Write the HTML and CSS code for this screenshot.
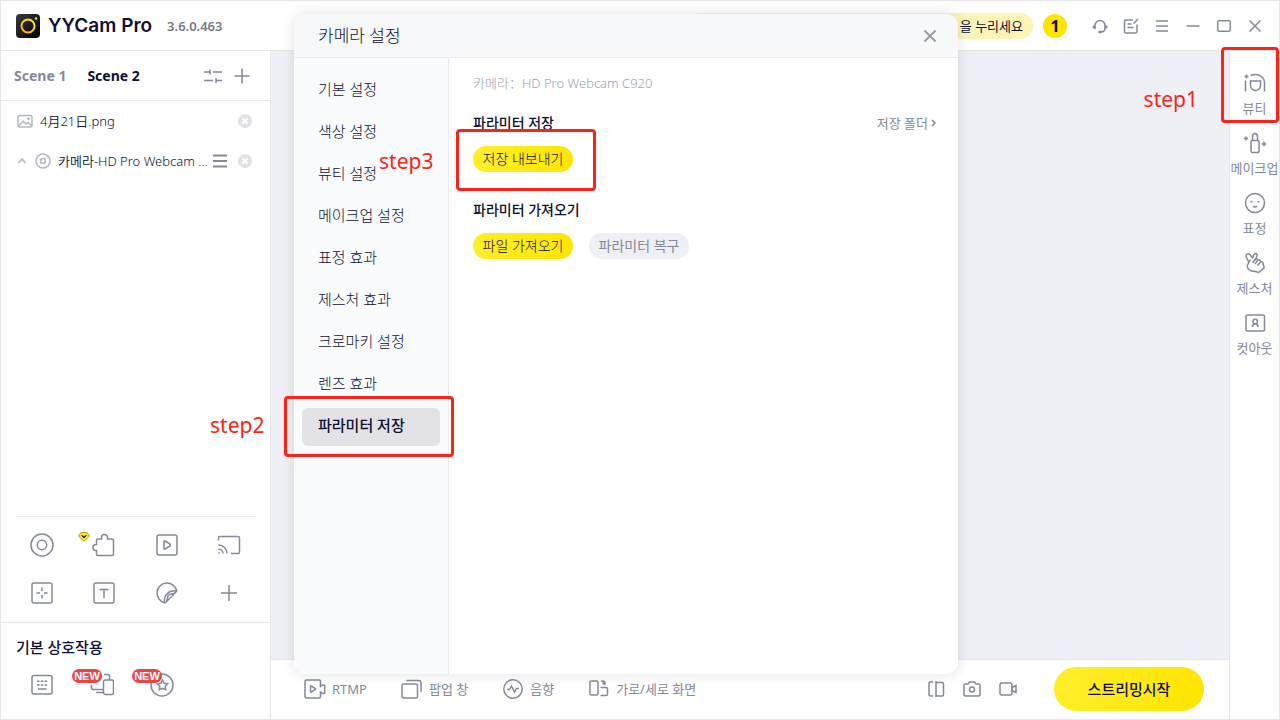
FILE: index.html
```html
<!DOCTYPE html>
<html lang="ko">
<head>
    <meta charset="UTF-8">
    <meta name="viewport" content="width=device-width, initial-scale=1.0">
    <title>YYCam Pro</title>
    <link rel="stylesheet" href="styles.css">
</head>
<body>
    <div class="app">
        <header class="topbar">
            <svg class="logo" width="24" height="24" viewBox="0 0 24 24">
                <defs>
                    <linearGradient id="logoRing" x1="1" y1="0" x2="0" y2="1"><stop offset="0" stop-color="#ffee00"/><stop offset="1" stop-color="#ffb400"/></linearGradient>
                    <linearGradient id="logoBg" x1="0" y1="0" x2="1" y2="1"><stop offset="0" stop-color="#3a3a3a"/><stop offset="1" stop-color="#000"/></linearGradient>
                </defs>
                <rect width="24" height="24" rx="4" fill="url(#logoBg)"/>
                <circle cx="12" cy="12" r="6.5" fill="none" stroke="url(#logoRing)" stroke-width="2"/>
                <circle cx="20" cy="4.5" r="1.2" fill="#ffe500"/>
            </svg>
            <h1 class="brand">YYCam Pro</h1>
            <span class="version">3.6.0.463</span>
            <div class="notice">을 누리세요</div>
            <div class="badge-count">1</div>
            <div class="window-actions">
                <button type="button" aria-label="고객센터"><svg width="16" height="16" viewBox="0 0 16 16"><path d="M3 11V7.500a5 5 0 0 1 10 0V10c0 2.500-1.500 4-4 4"/><path d="M2 7.500v3M14 7.500v3M6.500 14h3" stroke-width="2.500"/></svg></button>
                <button type="button" aria-label="메모"><svg width="16" height="16" viewBox="0 0 16 16"><path d="M10 2H3a1.500 1.500 0 0 0-1.500 1.500v10A1.500 1.500 0 0 0 3 15h9.500a1.500 1.500 0 0 0 1.500-1.500V6.500M4.500 6h4M4.500 9.500h6M10.500 5.500 15 1"/></svg></button>
                <button type="button" aria-label="메뉴"><svg width="16" height="16" viewBox="0 0 16 16"><path d="M2 3h12M2 8h12M2 13h12"/></svg></button>
                <button type="button" aria-label="최소화"><svg width="16" height="16" viewBox="0 0 16 16"><path d="M1.500 8h13"/></svg></button>
                <button type="button" aria-label="최대화"><svg width="16" height="16" viewBox="0 0 16 16"><rect x="1.700" y="2.700" width="12.600" height="10.600" rx="1.500"/></svg></button>
                <button type="button" aria-label="닫기"><svg width="16" height="16" viewBox="0 0 16 16"><path d="m2.500 2.500 11 11m0-11-11 11"/></svg></button>
            </div>
        </header>

        <aside class="sidebar">
            <div class="scene-tabs">
                <button type="button" class="scene-tab">Scene 1</button>
                <button type="button" class="scene-tab active">Scene 2</button>
                <button type="button" class="scene-action" aria-label="장면 설정"><svg width="18" height="18" viewBox="0 0 18 18"><path d="M0 5h6M6 2.500v5M9 5h9M0 13.500h9M12 13.500h6M12 11v5"/></svg></button>
                <button type="button" class="scene-action" aria-label="장면 추가"><svg width="16" height="16" viewBox="0 0 16 16"><path d="M8 .5v15M.5 8h15"/></svg></button>
            </div>

            <ul class="source-list">
                <li class="source">
                    <svg class="muted" width="16" height="16" viewBox="0 0 16 16"><rect x="1" y="2.500" width="14" height="11.500" rx="2"/><path d="m2 12.500 4-4.500 3 3 2-1.500 3.500 3"/><circle cx="11.500" cy="5.800" r=".6"/></svg>
                    <span class="source-name">4月21日.png</span>
                    <button type="button" class="remove" aria-label="삭제"><svg width="14" height="14" viewBox="0 0 14 14"><circle cx="7" cy="7" r="7"/><path d="m4.500 4.500 5 5m0-5-5 5"/></svg></button>
                </li>
                <li class="source">
                    <svg class="muted caret" width="10" height="10" viewBox="0 0 10 10"><path d="m1.500 7 3.500-4 3.500 4"/></svg>
                    <svg class="muted" width="16" height="16" viewBox="0 0 16 16"><circle cx="8" cy="8" r="7"/><circle cx="8" cy="8" r="2.500"/></svg>
                    <span class="source-name">카메라-HD Pro Webcam ...</span>
                    <button type="button" class="source-menu" aria-label="메뉴"><svg width="14" height="14" viewBox="0 0 14 14"><path d="M0 1.500h14M0 7h14M0 12.500h14" stroke-width="2"/></svg></button>
                    <button type="button" class="remove" aria-label="삭제"><svg width="14" height="14" viewBox="0 0 14 14"><circle cx="7" cy="7" r="7"/><path d="m4.500 4.500 5 5m0-5-5 5"/></svg></button>
                </li>
            </ul>

            <div class="tools">
                <button type="button" aria-label="카메라"><svg width="24" height="24" viewBox="0 0 24 24"><circle cx="12" cy="12" r="11"/><circle cx="12" cy="12" r="4.700"/></svg></button>
                <button type="button" aria-label="플러그인">
                    <svg width="24" height="24" viewBox="0 0 24 24"><path d="M6 6h3.500V4.500a3 3 0 0 1 6 0V6H20a1.500 1.500 0 0 1 1.500 1.500v13.500a1.500 1.500 0 0 1-1.500 1.500H6A1.500 1.500 0 0 1 4.500 21v-3.500H4a3 3 0 0 1 0-6h.5v-4A1.500 1.500 0 0 1 6 6z"/></svg>
                    <svg class="gem" width="12" height="10" viewBox="0 0 12 10"><path d="M3 .5h6L11.500 4 6 9.500.5 4z" fill="#ffe81a" stroke="#8a7a18" stroke-width=".7"/><path d="m3.500 3.500 2.500 2.500 2.500-2.500L6 4.500z" fill="#222" stroke="#222" stroke-width=".8"/></svg>
                </button>
                <button type="button" aria-label="미디어"><svg width="24" height="24" viewBox="0 0 24 24"><rect x="2" y="2" width="20" height="20" rx="2"/><path d="M9 8.500v7c0 .6.500.8 1 .5l5-3.200c.6-.4.600-1.200 0-1.600L10 8c-.5-.3-1-.1-1 .5z"/></svg></button>
                <button type="button" aria-label="화면 공유"><svg width="24" height="24" viewBox="0 0 24 24"><path d="M1.500 7.500V5A1.500 1.500 0 0 1 3 3.500h18A1.500 1.500 0 0 1 22.500 5v14a1.500 1.500 0 0 1-1.500 1.500h-7M1.500 12a8.500 8.500 0 0 1 8.500 8.500M1.500 16a4.500 4.500 0 0 1 4.500 4.500M1.500 19.500l1 1"/></svg></button>
                <button type="button" aria-label="캡처"><svg width="24" height="24" viewBox="0 0 24 24"><rect x="2" y="2" width="20" height="20" rx="2"/><path d="M12 6.500v3.500M12 14v3.500M6.500 12H10M14 12h3.500"/></svg></button>
                <button type="button" aria-label="텍스트"><svg width="24" height="24" viewBox="0 0 24 24"><rect x="2" y="2" width="20" height="20" rx="2"/><path d="M7.500 8.500h9M12 8.500v8.500"/></svg></button>
                <button type="button" aria-label="스티커"><svg width="24" height="24" viewBox="0 0 24 24"><path d="M9.500 21.700A10 10 0 1 1 21.700 9.500c-.2.800-.5 1.200-1 1.700l-9.500 9.700c-.5.500-1 .7-1.700.8zM9.500 21.500C8.500 14.500 13.500 9 21.500 10M11 20.500c2.500-1 .5-4.500 2.500-6.500s5.500 0 7-3"/></svg></button>
                <button type="button" aria-label="추가"><svg width="24" height="24" viewBox="0 0 24 24"><path d="M12 4v16M4 12h16"/></svg></button>
            </div>

            <div class="interactions">
                <h2>기본 상호작용</h2>
                <div class="interaction-icons">
                    <button type="button" aria-label="키보드"><svg width="24" height="24" viewBox="0 0 24 24"><rect x="2" y="2.500" width="20" height="18.500" rx="2"/><path d="M7 8.300h2.500M10.800 8.300h2.500M14.600 8.300h2.500M7 12h2.500M10.800 12h2.500M14.600 12h2.500M8 16h8.500"/></svg></button>
                    <button type="button" aria-label="기기 연결"><svg width="24" height="24" viewBox="0 0 24 24"><rect x="13.500" y="7" width="10" height="14.500" rx="2"/><path d="M14 1.500h4A1.500 1.500 0 0 1 19.500 3v4M1.500 12v3A1.500 1.500 0 0 0 3 16.500h10.500M6 19.500h7"/></svg><span class="new">NEW</span></button>
                    <button type="button" aria-label="즐겨찾기"><svg width="24" height="24" viewBox="0 0 24 24"><circle cx="12" cy="12" r="11"/><path d="m12.500 7 1.700 3.200 3.500.6-2.500 2.500.5 3.500-3.200-1.500-3.200 1.500.5-3.500-2.500-2.500 3.500-.6z"/></svg><span class="new">NEW</span></button>
                </div>
            </div>
        </aside>

        <main class="stage">
            <div class="preview"></div>
            <div class="toolbar">
                <div class="toolbar-left">
                    <button type="button"><svg width="22" height="20" viewBox="0 0 22 20"><path d="M16.500 5V2.500A1.500 1.500 0 0 0 15 1H2.500A1.500 1.500 0 0 0 1 2.500v15A1.500 1.500 0 0 0 2.500 19H15a1.500 1.500 0 0 0 1.500-1.500V15M16.500 5v2.500l2-1.500H20a.7.700 0 0 1 .7.700v7a.7.700 0 0 1-.7.700h-1.500l-2-1.500V15M6.500 7.500v5c0 .6.400.7.800.5l4-2.500c.4-.3.400-.7 0-1l-4-2.500c-.4-.2-.8-.1-.8.500z"/></svg>RTMP</button>
                    <button type="button"><svg width="22" height="20" viewBox="0 0 22 20"><rect x="1" y="5" width="15.500" height="14" rx="1.500"/><path d="M5.500 1.500h12A2.500 2.500 0 0 1 20 4v9"/></svg>팝업 창</button>
                    <button type="button"><svg width="22" height="20" viewBox="0 0 22 20"><circle cx="11" cy="10" r="9.200"/><path d="M5 10.500h2.500L9.500 7l3 6 1.800-3.500H17"/></svg>음향</button>
                    <button type="button"><svg width="22" height="20" viewBox="0 0 22 20"><rect x="2" y="2" width="8" height="14" rx="1.500"/><path d="M13 2h1.500a2.500 2.500 0 0 1 2.500 2.500V5M14.500 3.500 17 6M12.500 8.500H18a1.500 1.500 0 0 1 1.500 1.500v5a1.500 1.500 0 0 1-1.500 1.500h-5.500"/></svg>가로/세로 화면</button>
                </div>
                <div class="toolbar-right">
                    <button type="button" aria-label="좌우 반전"><svg width="18" height="18" viewBox="0 0 18 18"><path d="M6 2H3.500A1.500 1.500 0 0 0 2 3.500v11A1.500 1.500 0 0 0 3.500 16H6M9 1v16M9 2.500h6A1.500 1.500 0 0 1 16.500 4v10.500A1.500 1.500 0 0 1 15 16H9"/></svg></button>
                    <button type="button" aria-label="사진"><svg width="18" height="18" viewBox="0 0 18 18"><path d="m5 4 1.500-2h5L13 4h2.500A1.500 1.500 0 0 1 17 5.500v9a1.500 1.500 0 0 1-1.500 1.500h-13A1.500 1.500 0 0 1 1 14.500v-9A1.500 1.500 0 0 1 2.500 4z"/><circle cx="9" cy="9.500" r="2.500"/></svg></button>
                    <button type="button" aria-label="녹화"><svg width="18" height="18" viewBox="0 0 18 18"><rect x="1" y="3" width="12" height="12" rx="2"/><path d="m13 7.500 4-2v7l-4-2z"/></svg></button>
                    <button type="button" class="start-btn">스트리밍시작</button>
                </div>
            </div>
        </main>

        <nav class="rail">
            <button type="button"><svg width="24" height="24" viewBox="0 0 24 24"><path d="M2.500 9.500v11M3.500 3.500v4M1.500 5.500h4M7.500 4.500C14 2 21.500 5 21.500 12v8.500M7.500 10h10v4.500a5 5 0 0 1-10 0z"/></svg>뷰티</button>
            <button type="button"><svg width="24" height="24" viewBox="0 0 24 24"><path d="M9.500 9.500h5a1.500 1.500 0 0 1 1.500 1.500v9a1.500 1.500 0 0 1-1.500 1.500h-5A1.500 1.500 0 0 1 8 20v-9a1.500 1.500 0 0 1 1.500-1.500zM9.500 9.500V6c0-2 1-3.500 2.500-3.500s2.500 1.500 2.500 3.500v3.500M3 5.500v4M1 7.500h4M21 10.500v5M18.500 13h5"/></svg>메이크업</button>
            <button type="button"><svg width="24" height="24" viewBox="0 0 24 24"><circle cx="12" cy="12" r="9.500"/><path d="M8.500 10v1.500M15.500 10v1.500" stroke-width="2"/><path d="M10 15c1 1.200 3 1.200 4 0"/></svg>표정</button>
            <button type="button"><svg width="24" height="24" viewBox="0 0 24 24"><path d="M6 11.500 3.500 6.500C2 3.500 5 1.500 7 3.800L9.500 7 10.800 3.800c1-2.300 4-1.300 3.200 1L12 9.500M7.500 8.500 5 13c-1.200 2.500-.2 5 2 6.300 2.500 1.500 5.500.2 8.500 2.200l5.500-4.500c.3-1.500-.5-2.500-1-4 .5-1.500-1-2.700-2.500-2 .3-1.600-1.300-2.700-2.700-1.700 0-1.600-1.800-2.200-2.800-.8L9.500 12M14.800 9.300 12 13M17.500 11 14.500 14.500"/></svg>제스처</button>
            <button type="button"><svg width="24" height="24" viewBox="0 0 24 24"><rect x="3" y="4" width="18.500" height="16" rx="1.500"/><circle cx="12.200" cy="10.500" r="2.300"/><path d="M9.500 16c0-2 1-3.300 2.700-3.300s2.700 1.300 2.700 3.300"/></svg>컷아웃</button>
        </nav>

        <section class="modal" role="dialog" aria-labelledby="modalTitle">
            <div class="modal-header">
                <h2 id="modalTitle">카메라 설정</h2>
                <button type="button" class="modal-close" aria-label="닫기"><svg width="14" height="14" viewBox="0 0 14 14"><path d="m1.500 1.500 11 11m0-11-11 11"/></svg></button>
            </div>
            <div class="modal-body">
                <nav class="modal-nav">
                    <button type="button">기본 설정</button>
                    <button type="button">색상 설정</button>
                    <button type="button">뷰티 설정</button>
                    <button type="button">메이크업 설정</button>
                    <button type="button">표정 효과</button>
                    <button type="button">제스처 효과</button>
                    <button type="button">크로마키 설정</button>
                    <button type="button">렌즈 효과</button>
                    <button type="button" class="active">파라미터 저장</button>
                </nav>
                <div class="modal-content">
                    <p class="camera-name">카메라<span lang="zh">：</span>HD Pro Webcam C920</p>
                    <div class="section-head">
                        <h3>파라미터 저장</h3>
                        <a href="#" class="folder-link">저장 폴더<svg width="6" height="8" viewBox="0 0 6 8"><path d="m1 1 3 3-3 3"/></svg></a>
                    </div>
                    <div class="btn-row">
                        <button type="button" class="pill">저장 내보내기</button>
                    </div>
                    <div class="section-head">
                        <h3>파라미터 가져오기</h3>
                    </div>
                    <div class="btn-row">
                        <button type="button" class="pill">파일 가져오기</button>
                        <button type="button" class="pill secondary">파라미터 복구</button>
                    </div>
                </div>
            </div>
        </section>

        <!-- Guide steps -->
        <div class="mark mark-1"></div>
        <span class="step step-1">step1</span>
        <div class="mark mark-2"></div>
        <span class="step step-2">step2</span>
        <div class="mark mark-3"></div>
        <span class="step step-3">step3</span>
    </div>
</body>
</html>
```

FILE: styles.css
```css
* {
    box-sizing: border-box;
    margin: 0;
    padding: 0;
}

body {
    font-family: 'Noto Sans', 'Noto Sans CJK KR', sans-serif;
    font-size: 13px;
    line-height: 20px;
    color: #0f1035;
    background: white;
}

button {
    font: inherit;
    color: inherit;
    background: none;
    border: none;
    cursor: pointer;
}

svg {
    display: block;
    flex-shrink: 0;
    fill: none;
    stroke: #85899b;
    stroke-width: 1.5;
}

.app {
    position: relative;
    display: grid;
    grid-template-columns: 270px 1fr 50px;
    grid-template-rows: 50px 1fr;
    min-height: 100vh;
    border: 1px solid #e7e7e9;
}

/* Top bar */
.topbar {
    grid-column: 1 / -1;
    display: flex;
    align-items: center;
    padding: 0 12px 0 15px;
    border-bottom: 1px solid #e7e7e9;
}

.logo {
    stroke: none;
}

.brand {
    margin-left: 8px;
    font-family: Inter, sans-serif;
    font-size: 19px;
    line-height: 24px;
    font-weight: 600;
    white-space: nowrap;
}

.version {
    margin-left: 15px;
    font-size: 13px;
    font-weight: 600;
    color: #777b85;
}

.notice {
    width: 346px;
    height: 26px;
    margin-left: auto;
    padding-right: 10px;
    border-radius: 13px;
    background: #fff4b8;
    line-height: 26px;
    text-align: right;
}

.badge-count {
    width: 24px;
    height: 24px;
    margin: 0 21px 0 10px;
    border-radius: 50%;
    background: #ffe500;
    font-size: 16px;
    font-weight: 700;
    line-height: 24px;
    text-align: center;
}

.window-actions {
    display: flex;
    gap: 7px;
}

.window-actions button {
    display: flex;
    justify-content: center;
    width: 24px;
}

/* Left sidebar */
.sidebar {
    display: flex;
    flex-direction: column;
    border-right: 1px solid #e7e7e9;
}

.scene-tabs {
    display: flex;
    align-items: center;
    height: 50px;
    padding: 0 20px 0 13px;
    border-bottom: 1px solid #e7e7e9;
}

.scene-tab {
    margin-right: 21px;
    font-size: 14px;
    font-weight: 700;
    color: #85899b;
}

.scene-tab.active {
    margin-right: auto;
    color: #0f1035;
}

.scene-action {
    margin-left: 12px;
}

.source-list {
    list-style: none;
}

.source {
    display: flex;
    align-items: center;
    height: 40px;
    padding: 0 18px 0 16px;
}

.muted {
    margin-right: 7px;
    stroke: #b3b6c5;
}

.source .caret {
    margin-right: 8px;
}

.source-name {
    flex: 1;
    min-width: 0;
    font-weight: 350;
    white-space: nowrap;
}

.source-menu {
    margin-right: 11px;
}

.remove circle {
    fill: #e1e2e8;
    stroke: none;
}

.remove path {
    stroke: white;
    stroke-width: 2;
}

.tools {
    display: grid;
    grid-template-columns: repeat(4, 1fr);
    margin: auto 10px 0;
    padding: 5px 0;
    position: relative;
}

.tools::before {
    content: '';
    position: absolute;
    top: 0;
    left: 5px;
    right: 4px;
    border-top: 1px solid #e7e7e9;
}

.tools button {
    position: relative;
    display: flex;
    align-items: center;
    justify-content: center;
    height: 48px;
}

.gem {
    position: absolute;
    top: 11px;
    left: 5px;
}

.interactions {
    height: 97px;
    padding: 14px 15px 0;
    border-top: 1px solid #e7e7e9;
}

.interactions h2 {
    font-size: 15px;
    font-weight: 500;
}

.interaction-icons {
    display: flex;
    gap: 36px;
    padding: 16px 14px 0;
}

.interaction-icons button {
    position: relative;
}

.new {
    position: absolute;
    top: -4px;
    left: -18px;
    width: 30px;
    height: 14px;
    border-radius: 7px;
    background: #f04444;
    color: white;
    font-family: 'Liberation Sans', sans-serif;
    font-size: 11px;
    font-weight: 700;
    line-height: 14px;
}

/* Preview and bottom bar */
.stage {
    display: flex;
    flex-direction: column;
    min-width: 0;
}

.preview {
    flex: 1;
    background: #eff0f6;
}

.toolbar {
    display: flex;
    align-items: center;
    justify-content: space-between;
    height: 60px;
    padding: 0 25px 2px 33px;
    border-top: 1px solid #e7e7e9;
    color: #85899b;
}

.toolbar-left,
.toolbar-right {
    display: flex;
    align-items: center;
}

.toolbar-left {
    gap: 34px;
}

.toolbar-left button {
    display: flex;
    align-items: center;
    gap: 6px;
    white-space: nowrap;
}

.toolbar-right {
    gap: 18px;
}

.start-btn {
    width: 150px;
    height: 44px;
    margin-left: 19px;
    border-radius: 22px;
    background: linear-gradient(90deg, #ffee2b, #ffe500);
    color: #0f1035;
    font-size: 15px;
    font-weight: 500;
}

/* Right rail */
.rail {
    display: flex;
    flex-direction: column;
    padding-top: 20px;
    border-left: 1px solid #e7e7e9;
    color: #85899b;
}

.rail button {
    display: flex;
    flex-direction: column;
    align-items: center;
    gap: 3px;
    height: 60px;
    white-space: nowrap;
}

/* Settings dialog */
.modal {
    position: absolute;
    top: 13px;
    right: 321px;
    bottom: 45px;
    left: 293px;
    display: flex;
    flex-direction: column;
    border-radius: 12px;
    background: white;
    box-shadow: 0 0 14px rgba(0, 0, 0, 0.12);
    font-weight: 300;
    overflow: hidden;
}

.modal-header {
    display: flex;
    align-items: center;
    justify-content: space-between;
    height: 44px;
    padding: 0 21px 0 24px;
    border-bottom: 1px solid #e9ebef;
    background: #f7f8fa;
}

.modal-header h2 {
    font-size: 17px;
    font-weight: 300;
}

.modal-close svg {
    stroke: #9a9da8;
    stroke-width: 2;
}

.modal-body {
    flex: 1;
    display: flex;
}

.modal-nav {
    display: flex;
    flex-direction: column;
    gap: 4px;
    width: 155px;
    padding: 14px 8px;
    border-right: 1px solid #e9ebef;
    background: #fafbfd;
}

.modal-nav button {
    height: 38px;
    padding: 0 16px 4px;
    border-radius: 6px;
    font-size: 15px;
    text-align: left;
}

.modal-nav .active {
    background: #e3e2e7;
    font-weight: 500;
}

.modal-content {
    flex: 1;
    padding: 15px 21px 0 24px;
}

.camera-name {
    margin-bottom: 20px;
    color: #9da1b4;
}

.camera-name span {
    font-family: 'Noto Sans CJK SC', sans-serif;
}

.section-head {
    display: flex;
    align-items: center;
    justify-content: space-between;
    margin-bottom: 13px;
}

.section-head h3 {
    font-size: 14px;
    font-weight: 500;
}

.folder-link {
    display: flex;
    align-items: center;
    gap: 3px;
    color: #85899b;
    font-weight: 400;
    text-decoration: none;
}

.btn-row {
    display: flex;
    gap: 16px;
    margin-bottom: 28px;
}

.pill {
    width: 100px;
    height: 26px;
    border-radius: 13px;
    background: linear-gradient(90deg, #ffee2b, #ffe500);
    font-size: 14px;
}

.pill.secondary {
    background: #eff0f6;
    color: #85899b;
    font-weight: 400;
}

/* Guide steps */
.mark {
    position: absolute;
    border: 3px solid #ff2216;
    border-radius: 4px;
}

.mark-1 {
    top: 46px;
    right: 0;
    width: 58px;
    height: 76px;
}

.mark-2 {
    top: 395px;
    left: 283px;
    width: 170px;
    height: 61px;
}

.mark-3 {
    top: 128px;
    left: 455px;
    width: 140px;
    height: 62px;
}

.step {
    position: absolute;
    font-size: 21px;
    line-height: 28px;
    color: #ff2216;
}

.step-1 {
    top: 84px;
    right: 81px;
}

.step-2 {
    top: 410px;
    left: 209px;
}

.step-3 {
    top: 146px;
    left: 378px;
}
```
